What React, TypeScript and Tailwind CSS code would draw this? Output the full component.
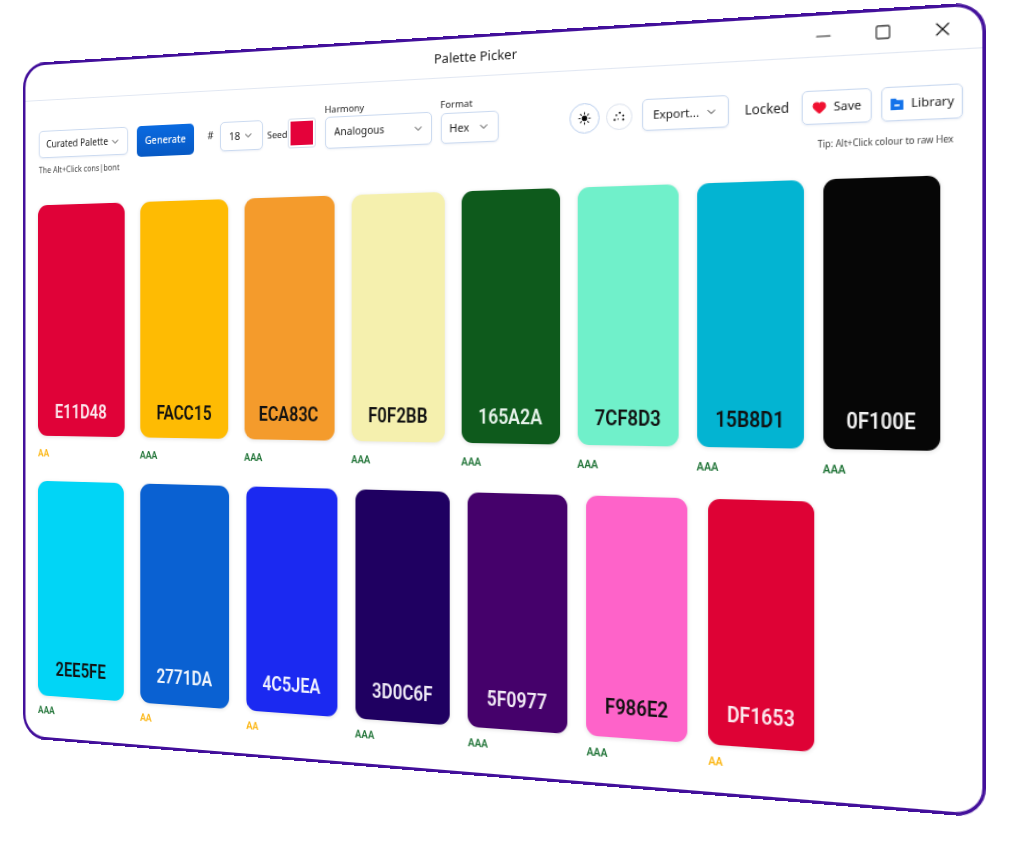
import { ChevronDown, Heart, Minus, Square, Sun, X } from "lucide-react";

type Swatch = { hex: string; bg: string; text: string; grade: "AA" | "AAA"; width: string };

const topRow: Swatch[] = [
  { hex: "E11D48", bg: "bg-[#e00238]", text: "text-[#fbe9ee]", grade: "AA", width: "w-[101.5px]" },
  { hex: "FACC15", bg: "bg-[#febb03]", text: "text-[#111111]", grade: "AAA", width: "w-[99px]" },
  { hex: "ECA83C", bg: "bg-[#f49b2c]", text: "text-[#111111]", grade: "AAA", width: "w-[97px]" },
  { hex: "F0F2BB", bg: "bg-[#f5f0ae]", text: "text-[#111111]", grade: "AAA", width: "w-[96px]" },
  { hex: "165A2A", bg: "bg-[#0e5a1c]", text: "text-[#e6f2ea]", grade: "AAA", width: "w-[97px]" },
  { hex: "7CF8D3", bg: "bg-[#70f0ca]", text: "text-[#111111]", grade: "AAA", width: "w-[95px]" },
  { hex: "15B8D1", bg: "bg-[#03b4d2]", text: "text-[#111111]", grade: "AAA", width: "w-[96px]" },
  { hex: "0F100E", bg: "bg-[#060606]", text: "text-[#f2f2f2]", grade: "AAA", width: "w-[100px]" },
];

const bottomRow: Swatch[] = [
  { hex: "2EE5FE", bg: "bg-[#01d5f6]", text: "text-[#111111]", grade: "AAA", width: "w-[101px]" },
  { hex: "2771DA", bg: "bg-[#0a61d2]", text: "text-[#f0f5fc]", grade: "AA", width: "w-[100.5px]" },
  { hex: "4C5JEA", bg: "bg-[#1b29f1]", text: "text-[#f0f1fe]", grade: "AA", width: "w-[98px]" },
  { hex: "3D0C6F", bg: "bg-[#1f0061]", text: "text-[#efeaf6]", grade: "AAA", width: "w-[97px]" },
  { hex: "5F0977", bg: "bg-[#45016b]", text: "text-[#f1e9f5]", grade: "AAA", width: "w-[97.5px]" },
  { hex: "F986E2", bg: "bg-[#fe63c9]", text: "text-[#111111]", grade: "AAA", width: "w-[95px]" },
  { hex: "DF1653", bg: "bg-[#de0235]", text: "text-[#fbe9ee]", grade: "AA", width: "w-[95px]" },
];

function Card({ swatch, height, pad, gap }: { swatch: Swatch; height: string; pad: string; gap: string }) {
  return (
    <div className={`shrink-0 ${swatch.width}`}>
      <div
        className={`flex items-end justify-center rounded-[11px] shadow-[0_1px_4px_rgba(0,0,0,0.12)] ${height} ${pad} ${swatch.bg}`}
      >
        <span
          className={`inline-block scale-x-[0.83] font-['Roboto',sans-serif] text-[21px] leading-[22px] font-semibold ${swatch.text}`}
        >
          {swatch.hex}
        </span>
      </div>
      <p
        className={`font-['Roboto',sans-serif] text-[10px] leading-[10px] font-semibold ${gap} ${
          swatch.grade === "AA" ? "text-[#fbb614]" : "text-[#1f7336]"
        }`}
      >
        {swatch.grade}
      </p>
    </div>
  );
}

function Select({ label, className }: { label: string; className: string }) {
  return (
    <div
      className={`flex items-center justify-between rounded-[5px] border border-[#cbdaf0] bg-white shadow-[0_1px_2px_rgba(30,70,140,0.08)] ${className}`}
    >
      <span className="truncate">{label}</span>
      <ChevronDown className="h-3 w-3 shrink-0 text-[#333333]" strokeWidth={2} />
    </div>
  );
}

function Dots() {
  return (
    <svg viewBox="0 0 24 24" className="h-[13px] w-[13px] fill-[#222222]">
      <circle cx="13" cy="5" r="2" />
      <circle cx="7" cy="9" r="1.6" />
      <circle cx="19" cy="10" r="1.8" />
      <circle cx="4" cy="17" r="2" />
      <circle cx="19" cy="17" r="2" />
      <circle cx="10" cy="16" r="1.2" />
    </svg>
  );
}

function FolderIcon() {
  return (
    <svg viewBox="0 0 24 24" className="h-[13px] w-[13px]">
      <path d="M2 3h8l2 3h10v16H2z" fill="#1473ea" />
      <rect x="8" y="13" width="8" height="3" fill="#ffffff" />
    </svg>
  );
}

export default function App() {
  return (
    <div className="h-[845px] w-[1024px] overflow-hidden bg-white font-['Noto_Sans',sans-serif] text-[#222222]">
      <div className="flex h-[720px] w-[960px] origin-top-left flex-col rounded-[26px] border-[3px] border-[#43109b] bg-white [transform:matrix3d(0.8246,-0.06477,0,-0.00018105,0,0.93681,0,0,0,0,1,0,23,63.5,0,1)]">
        {/* Title bar */}
        <div className="flex h-[38px] shrink-0 items-center border-b border-[#e1e7f2]">
          <span className="ml-[452px] text-[13px]">Palette Picker</span>
          <div className="mr-[23px] ml-auto flex items-center gap-[33.5px]">
            <Minus className="h-[20px] w-[20px]" strokeWidth={1.4} />
            <Square className="h-[15px] w-[15px]" strokeWidth={1.7} />
            <X className="h-[20px] w-[20px]" strokeWidth={1.4} />
          </div>
        </div>

        {/* Toolbar */}
        <div className="flex h-[89px] shrink-0 items-start justify-between pt-[19px] pr-[16px] pl-[16px]">
          <div>
            <div className="flex items-end">
              <Select label="Curated Palette" className="mb-[3px] h-[29px] w-[105px] px-[8px] text-[10px]" />
              <button className="ml-[10px] h-[32px] w-[65px] rounded-[5px] bg-gradient-to-b from-[#0a6ae0] to-[#0759c4] text-[10.5px] font-medium text-white">
                Generate
              </button>
              <span className="mb-[10px] ml-[15px] text-[10.5px]">#</span>
              <Select label="18" className="mb-[2px] ml-[7px] h-[30px] w-[47px] px-[9px] text-[11px]" />
              <span className="mb-[9px] ml-[5px] text-[9.5px]">Seed</span>
              <div className="mb-[2px] rounded-[3px] border border-[#d5deec] bg-white p-[2px]">
                <div className="h-[24px] w-[24px] bg-[#e4023a]" />
              </div>
              <div className="ml-[10px]">
                <p className="mb-[2px] text-[9.5px] leading-[11px]">Harmony</p>
                <Select label="Analogous" className="h-[32px] w-[111px] pr-[7px] pl-[9px] text-[10.5px]" />
              </div>
              <div className="ml-[9px]">
                <p className="mb-[3px] text-[9.5px] leading-[11px]">Format</p>
                <Select label="Hex" className="h-[30px] w-[58px] px-[8px] text-[11px]" />
              </div>
            </div>
            <p className="mt-[4px] text-[8.5px] leading-[11px] text-[#444444]">The Alt+Click cons|bont</p>
          </div>

          <div className="mt-[10px] flex flex-col items-end">
            <div className="flex h-[32px] items-center">
              <div className="flex h-[29px] w-[29px] items-center justify-center rounded-full border border-[#bcd0ee]">
                <Sun className="h-[13px] w-[13px] fill-black" strokeWidth={2} />
              </div>
              <div className="ml-[6px] flex h-[25px] w-[25px] items-center justify-center rounded-full border border-[#dde3ee]">
                <Dots />
              </div>
              <Select label="Export..." className="ml-[9px] h-[30px] w-[80px] px-[9px] text-[11px]" />
              <span className="ml-[14px] text-[12px]">Locked</span>
              <div className="ml-[11px] flex h-[31px] w-[61px] items-center justify-center gap-[6px] rounded-[5px] border border-[#cbdaf0] text-[11px] shadow-[0_1px_2px_rgba(30,70,140,0.08)]">
                <Heart className="h-[13px] w-[13px] fill-[#f01030] text-[#f01030]" />
                Save
              </div>
              <div className="ml-[8px] flex h-[31px] w-[69px] items-center justify-center gap-[5px] rounded-[5px] border border-[#cbdaf0] text-[11px] shadow-[0_1px_2px_rgba(30,70,140,0.08)]">
                <FolderIcon />
                Library
              </div>
            </div>
            <p className="mt-[12px] mr-[8px] text-[8px] leading-[11px] text-[#444444]">Tip: Alt+Click colour to raw Hex</p>
          </div>
        </div>

        {/* Swatches */}
        <div className="pt-[22px] pl-[15px]">
          <div className="flex">
            {topRow.map((s, i) => (
              <div key={s.hex} className={i === 0 ? "" : i < 4 ? "ml-[18px]" : "ml-[17px]"}>
                <Card swatch={s} height="h-[245px]" pad="pb-[15px]" gap="mt-[14px]" />
              </div>
            ))}
          </div>
          <div className="mt-[24px] flex gap-[18.7px]">
            {bottomRow.map((s) => (
              <Card key={s.hex} swatch={s} height="h-[228px]" pad="pb-[18px]" gap="mt-[11px]" />
            ))}
          </div>
        </div>
      </div>
    </div>
  );
}
